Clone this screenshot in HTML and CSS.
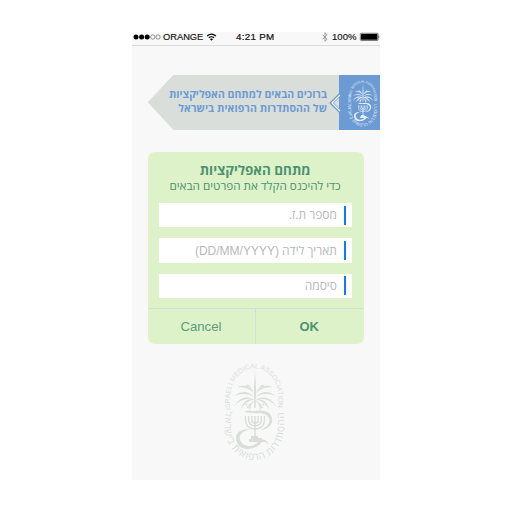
FILE: index.html
```html
<!DOCTYPE html>
<html lang="he">
<head>
<meta charset="utf-8">
<title>מתחם האפליקציות</title>
<link rel="stylesheet" href="styles.css">
</head>
<body>
<main class="phone">
  <header class="status">
    <svg class="dots" viewBox="0 0 28 6"><g fill="#000"><circle cx="3" cy="3" r="2.500"/><circle cx="8.600" cy="3" r="2.500"/><circle cx="14.200" cy="3" r="2.500"/></g><g fill="none" stroke="#555" stroke-width=".6"><circle cx="19.800" cy="3" r="2.200"/><circle cx="25" cy="3" r="2.200"/></g></svg>
    <span class="carrier">ORANGE</span>
    <svg class="wifi" viewBox="0 0 12 9"><g fill="none" stroke="#000" stroke-width="1.300"><path d="M1 3.400Q6-.8 11 3.400M3 5.400Q6 3 9 5.400"/></g><path d="M4.200 6.700Q6 5.500 7.800 6.700L6 8.600Z"/></svg>
    <span class="time">4:21 PM</span>
    <svg class="bluetooth" viewBox="0 0 6 10"><path d="M.6 2.700L5 7.200L3 9.300V.7L5 2.800L.6 7.300" fill="none" stroke="#888" stroke-width=".8"/></svg>
    <span class="percent">100%</span>
    <svg class="battery" viewBox="0 0 20 8"><rect x=".3" y=".3" width="17.800" height="7.200" rx="1" fill="none" stroke="#000" stroke-width=".5"/><rect x="1" y="1" width="16.400" height="5.800" rx=".5"/><path d="M18.700 2.500Q20 3.900 18.700 5.300Z"/></svg>
  </header>

  <section class="banner">
    <div class="ribbon" dir="rtl">
      <p class="welcome welcome-first">ברוכים הבאים למתחם האפליקציות</p>
      <p class="welcome welcome-second">של ההסתדרות הרפואית בישראל</p>
    </div>
    <div class="badge">
      <svg class="chevron" viewBox="0 0 11 22"><path d="M11 .2L.2 11L11 21.800Z" fill="#6b9bd2"/><path d="M11 3L3 11L11 19" fill="none" stroke="#fff" stroke-width="1.200"/><path d="M10 5.800L4.800 11L10 16.200Z" fill="#d9deda"/></svg>
      <svg class="badge-emblem" viewBox="0 0 62 98"><use href="#emblem"/></svg>
    </div>
  </section>

  <form class="dialog">
    <div class="dialog-body" dir="rtl">
      <h1 class="title"><span>מתחם האפליקציות</span></h1>
      <p class="subtitle"><span>כדי להיכנס הקלד את הפרטים הבאים</span></p>
      <div class="field"><span>מספר ת.ז.</span></div>
      <div class="field"><span>תאריך לידה <bdi class="format">(DD/MM/YYYY)</bdi></span></div>
      <div class="field"><span>סיסמה</span></div>
    </div>
    <div class="actions">
      <button type="button" class="action cancel">Cancel</button>
      <button type="button" class="action ok">OK</button>
    </div>
  </form>

  <svg class="watermark" viewBox="0 0 62 98">
    <defs>
      <path id="ring-top" d="M6.500 47V33A23.700 27.500 0 0 1 54.200 33V50"/>
      <path id="ring-bottom" d="M.7 49V64A29.700 33 0 0 0 60.200 64V40"/>
    </defs>
    <g id="emblem">
      <text class="ring-text"><textPath href="#ring-top">ISRAELI MEDICAL ASSOCIATION</textPath></text>
      <text class="ring-text ring-he"><textPath href="#ring-bottom">ההסתדרות הרפואית בישראל</textPath></text>
      <g fill="currentColor">
        <path d="M31 8L32.100 25L31.700 45H30.300L29.900 25Z"/>
        <path d="M30 30Q24 20 14 24Q23 23 30 30ZM32 30Q38 20 48 24Q39 23 32 30ZM30 34Q21 25 11 32.500Q22 28.500 30 34ZM32 34Q41 25 51 32.500Q40 28.500 32 34ZM30 37Q19 30 10 43Q20 33 30 37ZM32 37Q43 30 52 43Q42 33 32 37ZM29 28Q24 19 22 23Q26 23 29 28ZM33 28Q38 19 40 23Q36 23 33 28ZM30 36Q20 35 17 46Q22 38 30 36ZM32 36Q42 35 45 46Q40 38 32 36ZM30 38Q25 39 25 46H26Q27 40 30 38ZM32 38Q37 39 37 46H36Q35 40 32 38Z" stroke="currentColor" stroke-width=".2"/>
        <circle cx="22.500" cy="41.500" r="1"/><circle cx="25.500" cy="42" r="1"/><circle cx="24" cy="44" r="1"/><circle cx="36.500" cy="42" r="1"/><circle cx="39.500" cy="41.500" r="1"/><circle cx="38" cy="44" r="1"/>
        <path d="M20 49Q24 46.500 29 48.500Q36 46.500 42 48.500Q49 51 48 59Q46 66 36 67Q46 63 45.500 57Q44 50.500 36 50Q28 50.500 20 49Z"/>
        <path d="M27 66Q12 66 12 75Q13 86 24 86Q34 85 38 79Q42 78 45 82Q42 75 36 77Q30 84 24 83Q15.500 81 15.500 74Q17 68 27 66Z"/>
        <path d="M27 73H34V75H38V79H25V76H27Z"/>
      </g>
      <g fill="none" stroke="currentColor" stroke-width="1.400">
        <path d="M21.500 53V57Q22 66 31 66T40.500 57V53M24.700 53V57Q25 62.500 31 63Q37 62.500 37.300 57V53M27.900 53V58Q28 60 31 60Q34 60 34.100 58V53M31 53V75"/>
      </g>
    </g>
  </svg>
</main>
</body>
</html>
```

FILE: styles.css
```css
* { box-sizing: border-box; }
body { margin: 0; padding: 32px 132px; background: #fff; font-family: "Liberation Sans", sans-serif; }
p, h1 { margin: 0; }
svg { display: block; flex: none; overflow: visible; }
.phone { width: 248px; height: 448px; background: #f8f8f8; display: flex; flex-direction: column; }

.status { height: 14px; flex: none; display: flex; align-items: center; padding: 0 0 4px 1px; border-bottom: 1px solid #d8dcda; font-size: 9.300px; line-height: 10px; white-space: nowrap; color: #111; }
.dots { width: 28px; height: 6px; }
.carrier { margin-left: 2px; width: 41px; -webkit-text-stroke: .15px #111; }
.wifi { width: 11px; height: 8px; margin-left: 2px; }
.time { margin-left: 19px; width: 40px; font-size: 9.800px; letter-spacing: .3px; -webkit-text-stroke: .2px #111; }
.bluetooth { width: 6px; height: 10px; margin-left: 46px; }
.percent { margin-left: 4px; width: 26px; font-size: 9.600px; -webkit-text-stroke: .15px #111; }
.battery { width: 20px; height: 8px; margin-left: 2px; }

.banner { display: flex; margin: 28.500px 0 0 15.700px; height: 55.700px; flex: none; }
.ribbon { width: 191.300px; padding: 12.500px 12px 0 0; background: #d9deda; clip-path: polygon(26px 0, 100% 0, 100% 100%, 26px 100%, 0 50%); font-family: "Open Sans", sans-serif; font-weight: 700; font-size: 10.500px; line-height: 14.200px; color: #6b9bd2; white-space: nowrap; }
.welcome-second { letter-spacing: .09px; }
.badge { position: relative; width: 41px; background: #6b9bd2; color: #e6eff9; padding: 5px 0 0 9px; }
.chevron { position: absolute; left: -10px; top: 17px; width: 11px; height: 22px; }
.badge-emblem { width: 30px; height: 47px; }
.ring-text { font: 6.850px "Liberation Sans", sans-serif; fill: currentColor; }
.ring-he { font-family: "Open Sans", sans-serif; font-size: 10px; letter-spacing: .65px; }

.dialog { margin: 21.800px 0 0 15.600px; width: 216px; height: 192px; flex: none; border-radius: 7px; background: #ddf2c8; overflow: hidden; display: flex; flex-direction: column; }
.dialog-body { height: 156px; padding: 9px 12px 0 11px; font-family: "Open Sans", sans-serif; color: #4d9270; white-space: nowrap; }
.title { font-size: 13.400px; line-height: 18px; text-align: center; font-weight: 700; }
.subtitle { font-size: 11.700px; line-height: 13px; text-align: center; }
.field { height: 24.700px; margin-top: 10.800px; padding-right: 5.700px; background: #fff; display: flex; align-items: center; font-size: 12px; line-height: 20px; color: #b8b8b8; }
.subtitle + .field { margin-top: 10.700px; }
.field::before { content: ""; width: 2px; height: 19px; background: #0a7cff; margin-left: 7px; }
.format { font-family: "Liberation Sans", sans-serif; font-size: 12px; }
.actions { height: 36px; display: flex; border-top: 1px solid #cce3d8; }
.action { appearance: none; border: 0; margin: 0; padding: 0 1px 0 0; background: none; width: 107.700px; font: 13.200px "Liberation Sans", sans-serif; color: #5c9e7c; }
.ok { border-left: 1px solid #cce3d8; font-weight: 700; font-size: 13px; color: #4d9270; }
.watermark { width: 62px; height: 98px; margin: 19.500px 0 0 92px; color: #d9deda; }
```
